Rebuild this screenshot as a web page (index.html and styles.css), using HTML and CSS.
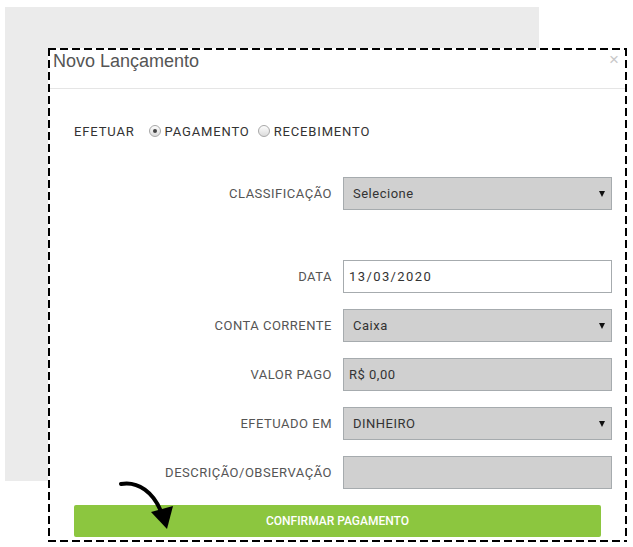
FILE: index.html
```html
<!DOCTYPE html>
<html lang="pt-BR">
<head>
<meta charset="utf-8">
<title>Novo Lançamento</title>
<link rel="stylesheet" href="styles.css">
</head>
<body>
<div class="backdrop"></div>

<div class="modal">
  <div class="modal-header">
    <h4 class="modal-title">Novo Lançamento</h4>
    <span class="close">×</span>
  </div>
  <div class="modal-body">
    <div class="efetuar">
      <span class="efetuar-label">EFETUAR</span>
      <label class="radio"><span class="radio-dot checked"></span>PAGAMENTO</label>
      <label class="radio"><span class="radio-dot"></span>RECEBIMENTO</label>
    </div>

    <div class="form">
      <div class="row row-spaced">
        <span class="label">CLASSIFICAÇÃO</span>
        <div class="field select"><span>Selecione</span><span class="caret"></span></div>
      </div>
      <div class="row">
        <span class="label">DATA</span>
        <div class="field text white"><span class="date">13/03/2020</span></div>
      </div>
      <div class="row">
        <span class="label">CONTA CORRENTE</span>
        <div class="field select"><span>Caixa</span><span class="caret"></span></div>
      </div>
      <div class="row">
        <span class="label">VALOR PAGO</span>
        <div class="field text"><span>R$ 0,00</span></div>
      </div>
      <div class="row">
        <span class="label">EFETUADO EM</span>
        <div class="field select"><span>DINHEIRO</span><span class="caret"></span></div>
      </div>
      <div class="row">
        <span class="label">DESCRIÇÃO/OBSERVAÇÃO</span>
        <div class="field text"></div>
      </div>
      <button class="confirm">CONFIRMAR PAGAMENTO</button>
    </div>
  </div>
</div>

<svg class="pointer" width="633" height="547" viewBox="0 0 633 547" aria-hidden="true">
  <path d="M121 484 C 138 481, 154 492, 162 514" fill="none" stroke="#000" stroke-width="4" stroke-linecap="round"/>
  <polygon points="167,529 151,512 173,506" fill="#000"/>
</svg>
</body>
</html>
```

FILE: styles.css
```css
* { box-sizing: border-box; }

html, body {
  margin: 0;
  padding: 0;
  background: #fff;
  width: 633px;
  height: 547px;
  overflow: hidden;
  font-family: Roboto, "Liberation Sans", sans-serif;
}

.backdrop {
  margin: 7px 0 0 5px;
  width: 534px;
  height: 474px;
  background: #ebebeb;
}

.modal {
  position: absolute;
  left: 48px;
  top: 48px;
  width: 579px;
  height: 494px;
  border: 2px solid transparent;
  background:
    linear-gradient(90deg, #000 8px, transparent 8px) 0 0 / 12px 2px repeat-x border-box,
    linear-gradient(90deg, #000 8px, transparent 8px) 0 100% / 12px 2px repeat-x border-box,
    linear-gradient(180deg, #000 8px, transparent 8px) 0 0 / 2px 12px repeat-y border-box,
    linear-gradient(180deg, #000 8px, transparent 8px) 100% 0 / 2px 12px repeat-y border-box,
    #fff;
}

.modal-header {
  height: 39px;
  border-bottom: 1px solid #e5e5e5;
  display: flex;
  justify-content: space-between;
  align-items: flex-start;
  padding: 1px 6px 0 3px;
}

.modal-title {
  margin: 0;
  font-family: "Liberation Sans", Arial, sans-serif;
  font-weight: normal;
  font-size: 18px;
  line-height: 20px;
  color: #555;
}

.close {
  font-family: "Liberation Sans", Arial, sans-serif;
  font-size: 17px;
  line-height: 14px;
  color: #c8c8c8;
  padding-top: 2px;
}

.modal-body {
  padding: 32px 13px 0 24px;
  letter-spacing: 0.5px;
}

.efetuar {
  display: flex;
  align-items: center;
  height: 20px;
  font-size: 13px;
  color: #333;
  letter-spacing: 0.85px;
}

.efetuar-label {
  margin-right: 14px;
}

.radio {
  display: flex;
  align-items: center;
  margin-right: 8px;
}

.radio-dot {
  width: 12px;
  height: 12px;
  border-radius: 50%;
  border: 1px solid #a8a8a8;
  background: linear-gradient(#fdfdfd, #dcdcdc);
  margin-right: 4px;
  display: flex;
  align-items: center;
  justify-content: center;
}

.radio-dot.checked::after {
  content: "";
  width: 4px;
  height: 4px;
  border-radius: 50%;
  background: #444;
}

.form {
  margin-top: 36px;
  display: flex;
  flex-direction: column;
  gap: 16px;
}

.row {
  display: grid;
  grid-template-columns: 258px 269px;
  column-gap: 11px;
  align-items: center;
}

.row-spaced {
  margin-bottom: 34px;
}

.label {
  text-align: right;
  font-size: 13px;
  color: #555;
  white-space: nowrap;
}

.field {
  height: 33px;
  border: 1px solid #a6abae;
  background: #d0d0d0;
  font-size: 13px;
  color: #333;
  display: flex;
  align-items: center;
  justify-content: space-between;
}

.field.select {
  padding: 0 6px 0 9px;
}

.field.text {
  padding: 0 6px 0 5px;
}

.field.white {
  background: #fff;
}

.date {
  letter-spacing: 1.4px;
}

.caret {
  width: 0;
  height: 0;
  border-left: 3px solid transparent;
  border-right: 3px solid transparent;
  border-top: 6px solid #111;
}

.confirm {
  width: 527px;
  height: 32px;
  border: none;
  border-radius: 2px;
  background: #8cc63f;
  color: #fff;
  font-family: Roboto, "Liberation Sans", sans-serif;
  font-weight: 500;
  font-size: 12px;
  letter-spacing: 0;
  padding: 0;
}

.pointer {
  position: absolute;
  left: 0;
  top: 0;
  pointer-events: none;
}
```
